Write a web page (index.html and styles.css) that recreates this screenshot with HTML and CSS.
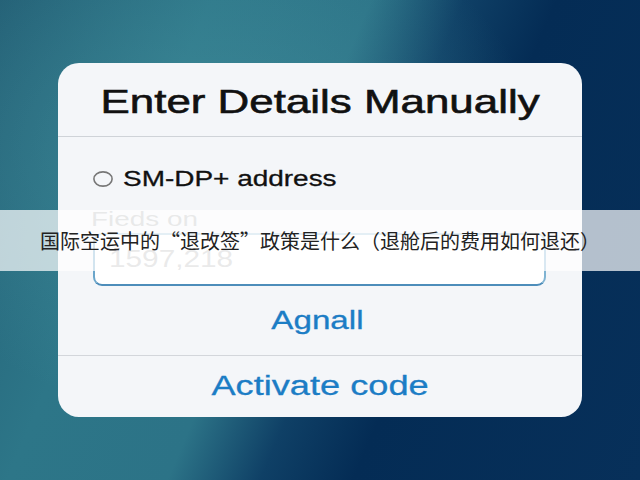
FILE: index.html
```html
<!DOCTYPE html>
<html lang="zh-CN">
<head>
<meta charset="utf-8">
<title>Enter Details Manually</title>
<link rel="stylesheet" href="styles.css">
</head>
<body>
<div class="stage">
  <div class="card">
    <div class="title"><span class="wide title-text">Enter Details Manually</span></div>
    <div class="form">
      <div class="radio-row">
        <svg class="radio" width="20" height="16" viewBox="0 0 20 16"><ellipse cx="10" cy="8" rx="9.1" ry="7.1" fill="none" stroke="#777" stroke-width="1.6"/></svg>
        <span class="wide-left radio-label">SM-DP+ address</span>
      </div>
      <div class="field-label"><span class="wide-left label-text">Fieds on</span></div>
      <div class="input"><span class="wide-left input-text">1597,218</span></div>
    </div>
    <div class="action primary"><span class="wide action-text">Agnall</span></div>
    <div class="action secondary"><span class="wide action-text">Activate code</span></div>
  </div>
</div>
<div class="caption">国际空运中的“退改签”政策是什么（退舱后的费用如何退还）</div>
</body>
</html>
```
FILE: styles.css
```css
html, body {
  margin: 0;
  padding: 0;
}
body {
  width: 640px;
  height: 480px;
  overflow: hidden;
  position: relative;
  font-family: "Liberation Sans", Arial, sans-serif;
  background:
    radial-gradient(ellipse 330px 260px at 210px 160px, rgba(72, 150, 162, 0.55), rgba(72, 150, 162, 0) 100%),
    linear-gradient(113deg, #235f75 0%, #2d7688 25%, #2c7387 44%, #0f4066 55%, #042c55 66%, #07305a 100%);
}
.stage {
  padding: 63px 58px 0;
}
.card {
  width: 524px;
  background: #f4f6f9;
  border-radius: 21px;
  overflow: hidden;
  color: #111;
}
.wide {
  display: inline-block;
  transform: scaleX(1.3);
  transform-origin: center;
  white-space: nowrap;
}
.wide-left {
  display: inline-block;
  transform: scaleX(1.3);
  transform-origin: left center;
  white-space: nowrap;
}
.title {
  padding-top: 22px;
  height: 51px;
  font-size: 33px;
  line-height: 33px;
  text-align: center;
  border-bottom: 1px solid #cfd3d8;
}
.title-text {
  transform: scaleX(1.33);
  -webkit-text-stroke: 0.6px #111;
}
.form {
  padding: 31px 36px 0 35px;
}
.radio-row {
  display: flex;
  align-items: center;
  height: 22px;
  gap: 10px;
  font-size: 21.5px;
  line-height: 22px;
}
.radio-label {
  -webkit-text-stroke: 0.3px #111;
}
.radio {
  display: block;
  flex: none;
}
.field-label {
  margin-top: 18px;
  margin-left: -2px;
  font-size: 20.5px;
  line-height: 21px;
  color: #b3b4b6;
}
.label-text {
  transform: scaleX(1.36);
}
.input {
  margin-top: 4px;
  box-sizing: border-box;
  height: 53px;
  border: 2px solid;
  border-color: #a3c8de #7fb3d2 #4d8dba #6aa5ca;
  border-radius: 9px;
  background: #ffffff;
  padding: 12px 12px 0 14px;
  font-size: 24px;
  line-height: 24px;
  color: #b7b8ba;
}
.input-text {
  transform: scaleX(1.24);
}
.action {
  text-align: center;
  color: #1c7dc5;
}
.action-text {
  -webkit-text-stroke: 0.3px #1c7dc5;
}
.primary {
  padding: 21px 6px 22px 0;
  font-size: 25.5px;
  line-height: 26px;
  border-bottom: 1px solid #d3d6db;
}
.secondary {
  padding: 17px 0;
  font-size: 27px;
  line-height: 27px;
}
.secondary .action-text {
  transform: scaleX(1.34);
}
.caption {
  position: absolute;
  left: 0;
  top: 210px;
  width: 640px;
  height: 61px;
  display: flex;
  align-items: center;
  justify-content: center;
  background: rgba(255, 255, 255, 0.7);
  font-family: "Noto Sans CJK SC", "Noto Sans", sans-serif;
  font-size: 20px;
  color: #222;
  white-space: nowrap;
}
```
